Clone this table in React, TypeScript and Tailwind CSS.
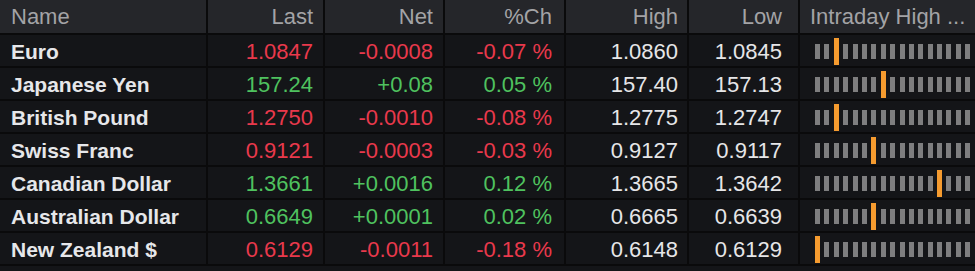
import React from "react";

type Row = {
  name: string;
  last: string;
  net: string;
  pct: string;
  high: string;
  low: string;
  up: boolean;
  mark: number;
};

const rows: Row[] = [
  { name: "Euro", last: "1.0847", net: "-0.0008", pct: "-0.07 %", high: "1.0860", low: "1.0845", up: false, mark: 2 },
  { name: "Japanese Yen", last: "157.24", net: "+0.08", pct: "0.05 %", high: "157.40", low: "157.13", up: true, mark: 7 },
  { name: "British Pound", last: "1.2750", net: "-0.0010", pct: "-0.08 %", high: "1.2775", low: "1.2747", up: false, mark: 2 },
  { name: "Swiss Franc", last: "0.9121", net: "-0.0003", pct: "-0.03 %", high: "0.9127", low: "0.9117", up: false, mark: 6 },
  { name: "Canadian Dollar", last: "1.3661", net: "+0.0016", pct: "0.12 %", high: "1.3665", low: "1.3642", up: true, mark: 13 },
  { name: "Australian Dollar", last: "0.6649", net: "+0.0001", pct: "0.02 %", high: "0.6665", low: "0.6639", up: true, mark: 6 },
  { name: "New Zealand $", last: "0.6129", net: "-0.0011", pct: "-0.18 %", high: "0.6148", low: "0.6129", up: false, mark: 0 },
];

const grid = "grid grid-cols-[208px_117px_120px_121px_123px_111px_175px]";
const sep = "border-r-2 border-[#0a0a0b]";

function RangeBar({ mark }: { mark: number }) {
  return (
    <div className="flex items-center gap-[4.4px]">
      {[...Array(17)].map((_, i) =>
        i === mark ? (
          <div key={i} className="w-[5px] h-[27px] bg-[#f59b2f]" />
        ) : (
          <div key={i} className="w-[5px] h-[15px] bg-[#7e7e7f]" />
        )
      )}
    </div>
  );
}

export default function App() {
  return (
    <div
      className="w-[975px] h-[271px] overflow-hidden bg-[#141518]"
      style={{ fontFamily: '"Liberation Sans", Arial, sans-serif' }}
    >
      {/* header */}
      <div className={`${grid} h-[35px] bg-[#25262a] border-b-2 border-[#0a0a0b] text-[22px] text-[#a3a3a6]`}>
        <div className={`${sep} flex items-center pl-[11px]`}>Name</div>
        <div className={`${sep} flex items-center justify-end pr-[10px]`}>Last</div>
        <div className={`${sep} flex items-center justify-end pr-[10px]`}>Net</div>
        <div className={`${sep} flex items-center justify-end pr-[12px]`}>%Ch</div>
        <div className={`${sep} flex items-center justify-end pr-[9px]`}>High</div>
        <div className={`${sep} flex items-center justify-end pr-[16px]`}>Low</div>
        <div className="flex items-center pl-[10px] whitespace-nowrap overflow-hidden">Intraday High ...</div>
      </div>

      {rows.map((r) => {
        const c = r.up ? "text-[#4fc25f]" : "text-[#e9394c]";
        return (
          <div key={r.name} className={`${grid} h-[33px] border-b-2 border-[#0a0a0b] text-[22px]`}>
            <div className={`${sep} flex items-center pl-[11px] font-bold text-[21px] text-[#e6e7ea] whitespace-nowrap`}>
              {r.name}
            </div>
            <div className={`${sep} flex items-center justify-end pr-[10px] ${c}`}>{r.last}</div>
            <div className={`${sep} flex items-center justify-end pr-[10px] ${c}`}>{r.net}</div>
            <div className={`${sep} flex items-center justify-end pr-[12px] ${c}`}>{r.pct}</div>
            <div className={`${sep} flex items-center justify-end pr-[9px] text-[#e6e6e8]`}>{r.high}</div>
            <div className={`${sep} flex items-center justify-end pr-[16px] text-[#e6e6e8]`}>{r.low}</div>
            <div className="flex items-center pl-[15px]">
              <RangeBar mark={r.mark} />
            </div>
          </div>
        );
      })}
    </div>
  );
}
